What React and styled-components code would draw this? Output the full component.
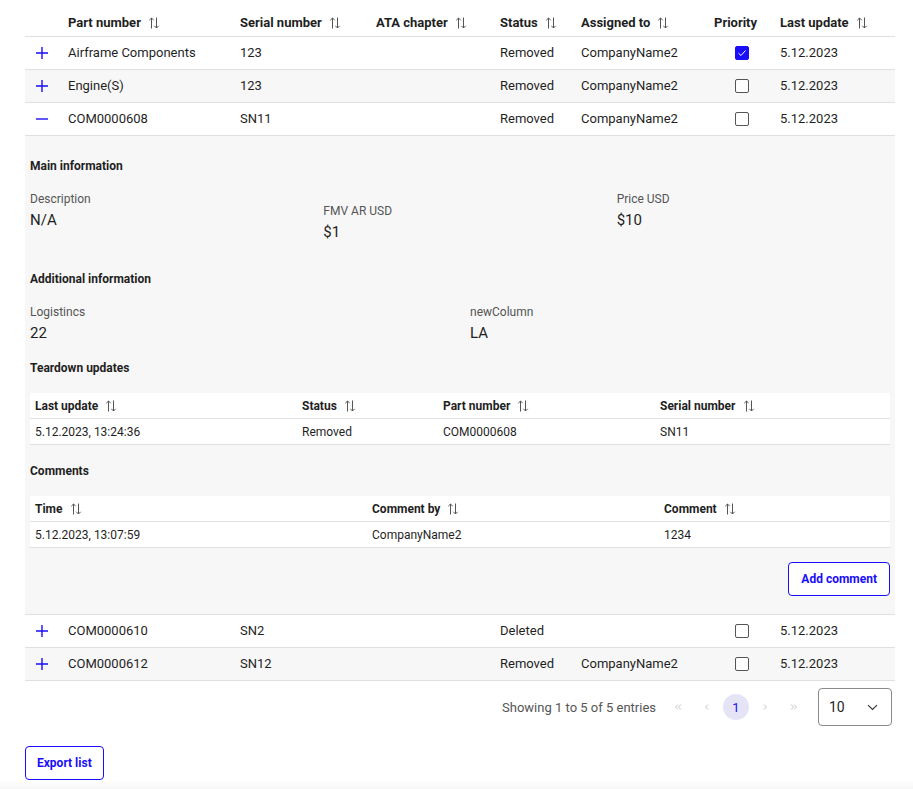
import React from "react";
import styled, { createGlobalStyle } from "styled-components";

const BLUE = "#1a0dfa";
const BORDER = "#e0e0e0";
const STRIPE = "#f7f7f7";

const Global = createGlobalStyle`
  html, body { margin: 0; padding: 0; background: #fff; }
  body { font-family: Roboto, "Liberation Sans", Arial, sans-serif; color: #1f1f1f; }
  * { box-sizing: border-box; }
`;

const Page = styled.div`
  padding: 9px 18px 0 25px;
  width: 913px;
`;

const Table = styled.table`
  width: 870px;
  border-collapse: separate;
  border-spacing: 0;
  table-layout: fixed;
  font-size: 13px;
`;

const HeadCell = styled.th`
  text-align: left;
  font-weight: 700;
  font-size: 13px;
  line-height: 16px;
  padding: 6px 8px 5px;
  border-bottom: 1px solid ${BORDER};
  white-space: nowrap;
  color: #1f1f1f;
`;

const SortWrap = styled.span`
  display: inline-flex;
  align-items: center;
  gap: 7px;
  vertical-align: top;
`;

const Row = styled.tr`
  &:nth-child(even) > td { background: ${STRIPE}; }
`;

const Cell = styled.td`
  padding: 8px 8px;
  line-height: 16px;
  height: 33px;
  border-bottom: 1px solid ${BORDER};
  white-space: nowrap;
  vertical-align: middle;
  padding-left: ${(p) => p.$pl ?? 8}px;
`;

const ExpandBtn = styled.span`
  display: flex;
  width: 14px;
  height: 16px;
  align-items: center;
  justify-content: center;
`;

const Check = styled.span`
  display: flex;
  width: 14px;
  height: 14px;
  border: 1px solid ${(p) => (p.$on ? BLUE : "#555")};
  background: ${(p) => (p.$on ? BLUE : "#fff")};
  border-radius: 2px;
  align-items: center;
  justify-content: center;
`;

const PanelCell = styled.td`
  padding: 0;
  border-bottom: 1px solid ${BORDER};
`;

const Panel = styled.div`
  background: ${STRIPE};
  padding: 22px 5px 18px;
  display: flex;
  flex-direction: column;
`;

const SectionTitle = styled.div`
  font-size: 12px;
  font-weight: 700;
  line-height: 16px;
  margin-bottom: 17px;
  color: #1f1f1f;
`;

const InfoGrid = styled.div`
  display: grid;
  grid-template-columns: repeat(${(p) => p.$cols}, 1fr);
  column-gap: 20px;
  margin-bottom: 17px;
  align-items: start;
`;

const InfoItem = styled.div`
  display: flex;
  flex-direction: column;
  gap: 3px;
  margin: ${(p) => (p.$shift ? "12px 0" : "0")};
`;

const InfoLabel = styled.div`
  font-size: 12px;
  line-height: 16px;
  color: #555;
`;

const InfoValue = styled.div`
  font-size: 15px;
  line-height: 20px;
  color: #1f1f1f;
`;

const SubTable = styled.table`
  width: 860px;
  border-collapse: separate;
  border-spacing: 0;
  table-layout: fixed;
  background: #fff;
  font-size: 12px;
  margin-bottom: ${(p) => p.$mb ?? 18}px;
`;

const SubHead = styled.th`
  text-align: left;
  font-weight: 700;
  line-height: 14px;
  padding: 6px 5px 5px;
  border-bottom: 1px solid ${BORDER};
  white-space: nowrap;
`;

const SubCell = styled.td`
  line-height: 14px;
  padding: 6px 5px 5px;
  border-bottom: 1px solid ${BORDER};
  white-space: nowrap;
`;

const OutlineButton = styled.button`
  font-family: Roboto, "Liberation Sans", Arial, sans-serif;
  font-size: 12px;
  font-weight: 700;
  color: ${BLUE};
  background: #fff;
  border: 1px solid ${BLUE};
  border-radius: 4px;
  height: 34px;
  padding: 0 ${(p) => p.$px ?? 11}px;
  cursor: pointer;
  align-self: ${(p) => p.$align ?? "auto"};
  margin-top: ${(p) => p.$mt ?? 0}px;
`;

const Pager = styled.div`
  width: 870px;
  display: flex;
  justify-content: flex-end;
  align-items: center;
  padding: 7px 3px 0 0;
`;

const PagerText = styled.span`
  font-size: 13px;
  color: #555;
  margin-right: 9px;
`;

const PageBtns = styled.div`
  display: flex;
  gap: 3px;
  margin-right: 11px;
`;

const PageBtn = styled.span`
  width: 26px;
  height: 26px;
  border-radius: 50%;
  display: inline-flex;
  align-items: center;
  justify-content: center;
  font-size: 13px;
  color: ${(p) => (p.$active ? BLUE : "#c4c4c4")};
  background: ${(p) => (p.$active ? "#e4e4f6" : "transparent")};
`;

const SizeSelect = styled.div`
  width: 74px;
  height: 38px;
  border: 1px solid #8a8a8a;
  border-radius: 4px;
  display: flex;
  align-items: center;
  justify-content: space-between;
  padding: 0 13px 0 10px;
  font-size: 14px;
  color: #1f1f1f;
`;

const Footer = styled.div`
  padding-top: 20px;
`;

const Fade = styled.div`
  height: 12px;
  margin-left: -25px;
  margin-right: -18px;
  background: linear-gradient(to bottom, #ffffff, #f4f4f4);
`;

const SortIcon = () => (
  <svg width="12" height="12" viewBox="0 0 12 12" fill="none" stroke="#555" strokeWidth="1">
    <path d="M3.5 11.5V1 M1.3 3.2L3.5 1L5.7 3.2" />
    <path d="M8.5 0.5V11 M6.3 8.8L8.5 11L10.7 8.8" />
  </svg>
);

const Sortable = ({ children }) => (
  <SortWrap>
    {children}
    <SortIcon />
  </SortWrap>
);

const PlusIcon = () => (
  <svg width="14" height="14" viewBox="0 0 14 14" stroke={BLUE} strokeWidth="1.4" fill="none">
    <path d="M7 1V13 M1 7H13" />
  </svg>
);

const MinusIcon = () => (
  <svg width="14" height="14" viewBox="0 0 14 14" stroke={BLUE} strokeWidth="1.4" fill="none">
    <path d="M1 7H13" />
  </svg>
);

const CheckMark = () => (
  <svg width="10" height="10" viewBox="0 0 10 10" fill="none" stroke="#fff" strokeWidth="1">
    <path d="M1.5 5.2L4 7.5L8.5 2.5" />
  </svg>
);

const Chevron = ({ d }) => (
  <svg width="8" height="8" viewBox="0 0 8 8" fill="none" stroke="#c4c4c4" strokeWidth="1">
    <path d={d} />
  </svg>
);

const rows = [
  { pn: "Airframe Components", sn: "123", status: "Removed", to: "CompanyName2", prio: true },
  { pn: "Engine(S)", sn: "123", status: "Removed", to: "CompanyName2", prio: false },
  { pn: "COM0000608", sn: "SN11", status: "Removed", to: "CompanyName2", prio: false, open: true },
  { pn: "COM0000610", sn: "SN2", status: "Deleted", to: "", prio: false },
  { pn: "COM0000612", sn: "SN12", status: "Removed", to: "CompanyName2", prio: false },
];

const Details = () => (
  <Panel>
    <SectionTitle>Main information</SectionTitle>
    <InfoGrid $cols={3}>
      <InfoItem>
        <InfoLabel>Description</InfoLabel>
        <InfoValue>N/A</InfoValue>
      </InfoItem>
      <InfoItem $shift>
        <InfoLabel>FMV AR USD</InfoLabel>
        <InfoValue>$1</InfoValue>
      </InfoItem>
      <InfoItem>
        <InfoLabel>Price USD</InfoLabel>
        <InfoValue>$10</InfoValue>
      </InfoItem>
    </InfoGrid>
    <SectionTitle>Additional information</SectionTitle>
    <InfoGrid $cols={2}>
      <InfoItem>
        <InfoLabel>Logistincs</InfoLabel>
        <InfoValue>22</InfoValue>
      </InfoItem>
      <InfoItem>
        <InfoLabel>newColumn</InfoLabel>
        <InfoValue>LA</InfoValue>
      </InfoItem>
    </InfoGrid>
    <SectionTitle>Teardown updates</SectionTitle>
    <SubTable>
      <colgroup>
        <col style={{ width: 267 }} />
        <col style={{ width: 141 }} />
        <col style={{ width: 217 }} />
        <col />
      </colgroup>
      <thead>
        <tr>
          <SubHead><Sortable>Last update</Sortable></SubHead>
          <SubHead><Sortable>Status</Sortable></SubHead>
          <SubHead><Sortable>Part number</Sortable></SubHead>
          <SubHead><Sortable>Serial number</Sortable></SubHead>
        </tr>
      </thead>
      <tbody>
        <tr>
          <SubCell>5.12.2023, 13:24:36</SubCell>
          <SubCell>Removed</SubCell>
          <SubCell>COM0000608</SubCell>
          <SubCell>SN11</SubCell>
        </tr>
      </tbody>
    </SubTable>
    <SectionTitle>Comments</SectionTitle>
    <SubTable $mb={0}>
      <colgroup>
        <col style={{ width: 337 }} />
        <col style={{ width: 292 }} />
        <col />
      </colgroup>
      <thead>
        <tr>
          <SubHead><Sortable>Time</Sortable></SubHead>
          <SubHead><Sortable>Comment by</Sortable></SubHead>
          <SubHead><Sortable>Comment</Sortable></SubHead>
        </tr>
      </thead>
      <tbody>
        <tr>
          <SubCell>5.12.2023, 13:07:59</SubCell>
          <SubCell>CompanyName2</SubCell>
          <SubCell>1234</SubCell>
        </tr>
      </tbody>
    </SubTable>
    <OutlineButton $align="flex-end" $mt={14} $px={12}>Add comment</OutlineButton>
  </Panel>
);

export default function App() {
  return (
    <>
      <Global />
      <Page>
        <Table>
          <colgroup>
            <col style={{ width: 35 }} />
            <col style={{ width: 172 }} />
            <col style={{ width: 136 }} />
            <col style={{ width: 124 }} />
            <col style={{ width: 81 }} />
            <col style={{ width: 133 }} />
            <col style={{ width: 66 }} />
            <col style={{ width: 123 }} />
          </colgroup>
          <thead>
            <tr>
              <HeadCell />
              <HeadCell><Sortable>Part number</Sortable></HeadCell>
              <HeadCell><Sortable>Serial number</Sortable></HeadCell>
              <HeadCell><Sortable>ATA chapter</Sortable></HeadCell>
              <HeadCell><Sortable>Status</Sortable></HeadCell>
              <HeadCell><Sortable>Assigned to</Sortable></HeadCell>
              <HeadCell>Priority</HeadCell>
              <HeadCell><Sortable>Last update</Sortable></HeadCell>
            </tr>
          </thead>
          <tbody>
            {rows.flatMap((r, i) => {
              const out = [
                <Row key={i}>
                  <Cell $pl={10}>
                    <ExpandBtn>{r.open ? <MinusIcon /> : <PlusIcon />}</ExpandBtn>
                  </Cell>
                  <Cell>{r.pn}</Cell>
                  <Cell>{r.sn}</Cell>
                  <Cell />
                  <Cell>{r.status}</Cell>
                  <Cell>{r.to}</Cell>
                  <Cell $pl={29}>
                    <Check $on={r.prio}>{r.prio && <CheckMark />}</Check>
                  </Cell>
                  <Cell>5.12.2023</Cell>
                </Row>,
              ];
              if (r.open) {
                out.push(
                  <Row key={i + "x"}>
                    <PanelCell colSpan={8}>
                      <Details />
                    </PanelCell>
                  </Row>
                );
              }
              return out;
            })}
          </tbody>
        </Table>
        <Pager>
          <PagerText>Showing 1 to 5 of 5 entries</PagerText>
          <PageBtns>
            <PageBtn><Chevron d="M4 1.5L1.5 4L4 6.5 M7 1.5L4.5 4L7 6.5" /></PageBtn>
            <PageBtn><Chevron d="M5 1.5L2.5 4L5 6.5" /></PageBtn>
            <PageBtn $active>1</PageBtn>
            <PageBtn><Chevron d="M3 1.5L5.5 4L3 6.5" /></PageBtn>
            <PageBtn><Chevron d="M1 1.5L3.5 4L1 6.5 M4 1.5L6.5 4L4 6.5" /></PageBtn>
          </PageBtns>
          <SizeSelect>
            10
            <svg width="11" height="7" viewBox="0 0 11 7" fill="none" stroke="#333" strokeWidth="1.1">
              <path d="M1 1.2L5.5 5.5L10 1.2" />
            </svg>
          </SizeSelect>
        </Pager>
        <Footer>
          <OutlineButton>Export list</OutlineButton>
        </Footer>
        <Fade />
      </Page>
    </>
  );
}
